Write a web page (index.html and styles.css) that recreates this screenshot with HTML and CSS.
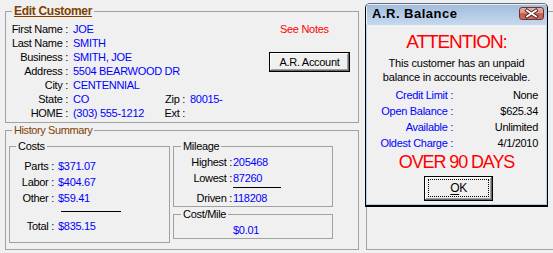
FILE: index.html
```html
<!DOCTYPE html>
<html lang="en">
<head>
<meta charset="utf-8">
<title>Edit Customer</title>
<link rel="stylesheet" href="styles.css">
</head>
<body>
<div class="screen">
  <div class="main">
    <fieldset class="group edit">
      <legend class="edit-title">Edit Customer</legend>
      <div class="edit-body">
        <div class="cust-grid">
          <span class="lbl">First Name :</span><span class="val wide">JOE</span>
          <span class="lbl">Last Name :</span><span class="val wide">SMITH</span>
          <span class="lbl">Business :</span><span class="val wide">SMITH, JOE</span>
          <span class="lbl">Address :</span><span class="val wide">5504 BEARWOOD DR</span>
          <span class="lbl">City :</span><span class="val wide">CENTENNIAL</span>
          <span class="lbl">State :</span><span class="val">CO</span><span class="lbl">Zip :</span><span class="val">80015-</span>
          <span class="lbl">HOME :</span><span class="val">(303) 555-1212</span><span class="lbl">Ext :</span><span class="val"></span>
        </div>
        <div class="cust-side">
          <span class="notes">See Notes</span>
          <button class="btn ar-btn" type="button">A.R. Account</button>
        </div>
      </div>
    </fieldset>
    <fieldset class="group history">
      <legend class="history-title">History Summary</legend>
      <div class="history-body">
        <fieldset class="group costs">
          <legend>Costs</legend>
          <div class="costs-body">
            <div class="kv costs-kv">
              <span class="lbl">Parts :</span><span class="val">$371.07</span>
              <span class="lbl">Labor :</span><span class="val">$404.67</span>
              <span class="lbl">Other :</span><span class="val">$59.41</span>
            </div>
            <div class="rule costs-rule"></div>
            <div class="kv costs-kv total">
              <span class="lbl">Total :</span><span class="val">$835.15</span>
            </div>
          </div>
        </fieldset>
        <div class="mile-col">
          <fieldset class="group mileage">
            <legend>Mileage</legend>
            <div class="mileage-body">
              <div class="kv mile-kv">
                <span class="lbl">Highest :</span><span class="val">205468</span>
                <span class="lbl">Lowest :</span><span class="val">87260</span>
              </div>
              <div class="rule mile-rule"></div>
              <div class="kv mile-kv driven">
                <span class="lbl">Driven :</span><span class="val">118208</span>
              </div>
            </div>
          </fieldset>
          <fieldset class="group cpm">
            <legend>Cost/Mile</legend>
            <div class="cpm-body"><span class="val">$0.01</span></div>
          </fieldset>
        </div>
      </div>
    </fieldset>
  </div>
  <div class="aside"></div>
</div>

<div class="dialog">
  <div class="titlebar">
    <span class="title">A.R. Balance</span>
    <span class="close">
      <svg width="25" height="13" viewBox="0 0 25 13">
        <path d="M8 3.5 L17 9.5 M17 3.5 L8 9.5" stroke="#4a2622" stroke-width="3.6" stroke-linecap="square" fill="none"/>
        <path d="M8 3.5 L17 9.5 M17 3.5 L8 9.5" stroke="#ffffff" stroke-width="1.8" stroke-linecap="square" fill="none"/>
      </svg>
    </span>
  </div>
  <div class="dlg-body">
    <div class="attention">ATTENTION:</div>
    <p class="msg">This customer has an unpaid<br>balance in accounts receivable.</p>
    <div class="ar-grid">
      <span class="k">Credit Limit :</span><span class="v">None</span>
      <span class="k">Open Balance :</span><span class="v">$625.34</span>
      <span class="k">Available :</span><span class="v">Unlimited</span>
      <span class="k">Oldest Charge :</span><span class="v">4/1/2010</span>
    </div>
    <div class="overdue">OVER 90 DAYS</div>
    <button class="btn ok-btn" type="button"><span class="focus"><u>O</u>K</span></button>
  </div>
</div>
</body>
</html>
```

FILE: styles.css
```css
* { box-sizing: border-box; }

html, body {
  margin: 0;
  padding: 0;
}

body {
  width: 553px;
  height: 253px;
  overflow: hidden;
  position: relative;
  background: #f0f0f0;
  color: #000;
  font-family: "Liberation Sans", Arial, sans-serif;
  font-size: 11px;
  letter-spacing: -0.3px;
}

.screen {
  display: flex;
  padding-top: 4px;
  height: 253px;
}

.main {
  margin-left: 5px;
  width: 354px;
  flex: none;
  display: flex;
  flex-direction: column;
}

fieldset.group {
  margin: 0;
  padding: 0;
  min-width: 0;
  border: 1px solid #a0a0a0;
}

fieldset.group > legend {
  padding: 0 2px;
  line-height: 14px;
  white-space: nowrap;
}

.val { color: #0000ff; white-space: nowrap; }
.lbl { text-align: right; white-space: nowrap; }

/* Edit customer */
.edit-title {
  margin-left: 6px;
  font-size: 12px;
  font-weight: bold;
  color: #804000;
  text-decoration: underline;
  letter-spacing: -0.3px;
}

.edit-body {
  display: flex;
  padding: 4px 0 2px;
}

.cust-grid {
  display: grid;
  grid-template-columns: 62px 85px 22px auto;
  column-gap: 5px;
  line-height: 14px;
}

.cust-grid .wide { grid-column: span 3; }

.cust-side {
  margin-left: auto;
  margin-right: 8px;
  width: 81px;
  display: flex;
  flex-direction: column;
  align-items: flex-start;
}

.notes {
  margin-left: 11px;
  line-height: 14px;
  color: #ff0000;
}

.btn {
  font-family: inherit;
  font-size: 11px;
  letter-spacing: inherit;
  color: #000;
  background: #f0f0f0;
  border: 1px solid #000;
  box-shadow: inset -1px -1px 0 #696969, inset 1px 1px 0 #ffffff, inset -2px -2px 0 #a0a0a0;
  padding: 0;
  margin: 0;
}

.ar-btn {
  margin-top: 16px;
  width: 81px;
  height: 20px;
  line-height: 16px;
}

/* History */
.history {
  margin-top: 1px;
}

.history-title {
  margin-left: 6px;
  color: #804000;
  letter-spacing: -0.4px;
}

.history-body {
  display: flex;
  align-items: flex-start;
  gap: 3px;
  padding: 2px 0 6px 3px;
}

.costs {
  width: 161px;
  flex: none;
}

.costs > legend { margin-left: 6px; }

.costs-body {
  padding: 5px 0 8px;
}

.kv { display: grid; }

.costs-kv {
  grid-template-columns: 44px auto;
  column-gap: 4px;
  line-height: 16px;
}

.rule {
  height: 1px;
  background: #000;
}

.costs-rule {
  margin: 5px 0 0 51px;
  width: 60px;
}

.costs-kv.total { margin-top: 6px; }

.mile-col {
  width: 160px;
  flex: none;
  display: flex;
  flex-direction: column;
}

.mileage > legend,
.cpm > legend { margin-left: 7px; }

.mileage-body {
  padding: 1px 0 1px;
}

.mile-kv {
  grid-template-columns: 58px auto;
  column-gap: 1px;
  line-height: 16px;
}

.mile-rule {
  margin: 1px 0 0 59px;
  width: 48px;
}

.mile-kv.driven {
  margin-top: 3px;
  line-height: 14px;
}

.cpm { margin-top: 4px; }

.cpm-body {
  padding: 2px 0 1px 59px;
  line-height: 14px;
}

/* Background group behind dialog */
.aside {
  flex: none;
  margin-left: 7px;
  margin-top: 7px;
  width: 200px;
  height: 239px;
  border: 1px solid #a0a0a0;
}

/* Dialog */
.dialog {
  position: absolute;
  left: 365px;
  top: 3px;
  width: 183px;
  border: 1px solid #000;
  border-bottom-width: 2px;
  border-top-color: #5f6f84;
  border-radius: 5px 5px 0 0;
  background: #f0f0f0;
  overflow: hidden;
  display: flex;
  flex-direction: column;
}

.titlebar {
  height: 21px;
  flex: none;
  display: flex;
  justify-content: space-between;
  align-items: flex-start;
  padding: 0 3px 0 6px;
  background: linear-gradient(#a2bbda, #b6cce6 55%, #c4d8ef);
  box-shadow: inset 1px 1px 0 rgba(255, 255, 255, 0.75);
}

.title {
  font-size: 13px;
  font-weight: bold;
  line-height: 20px;
  letter-spacing: 0.5px;
}

.close {
  margin-top: 3px;
  width: 25px;
  height: 13px;
  border: 1px solid #6e3530;
  border-radius: 3px;
  background: linear-gradient(#e6b1a8 0%, #d99588 45%, #c4584a 52%, #cc6b5d 100%);
  display: flex;
  align-items: center;
  justify-content: center;
  overflow: hidden;
}

.close svg {
  display: block;
  flex: none;
}

.dlg-body {
  flex: none;
  border: 1px solid #a9d3f0;
  border-top: 0;
  padding: 6px 0 3px;
  text-align: center;
}

.attention {
  font-size: 19px;
  line-height: 22px;
  color: #ff0000;
  letter-spacing: -1.1px;
}

.msg {
  margin: 3px 0 0;
  line-height: 14px;
  letter-spacing: -0.2px;
}

.ar-grid {
  display: grid;
  grid-template-columns: 1fr 85px;
  padding: 0 8px 0 4px;
  margin-top: 3px;
  line-height: 16px;
}

.ar-grid .k {
  text-align: right;
  color: #0000ff;
  white-space: nowrap;
}

.ar-grid .v {
  text-align: right;
  white-space: nowrap;
}

.overdue {
  margin-top: 1px;
  font-size: 18px;
  line-height: 20px;
  color: #ff0000;
  letter-spacing: -1.1px;
}

.ok-btn {
  display: flex;
  margin: 4px 0 0 57px;
  width: 69px;
  height: 25px;
  padding: 2px 3px 3px 3px;
  font-size: 12px;
}

.ok-btn .focus {
  flex: 1;
  border: 1px dotted #000;
  line-height: 16px;
  text-align: center;
  letter-spacing: -0.5px;
}

.ok-btn u {
  text-underline-offset: 2px;
}
```
